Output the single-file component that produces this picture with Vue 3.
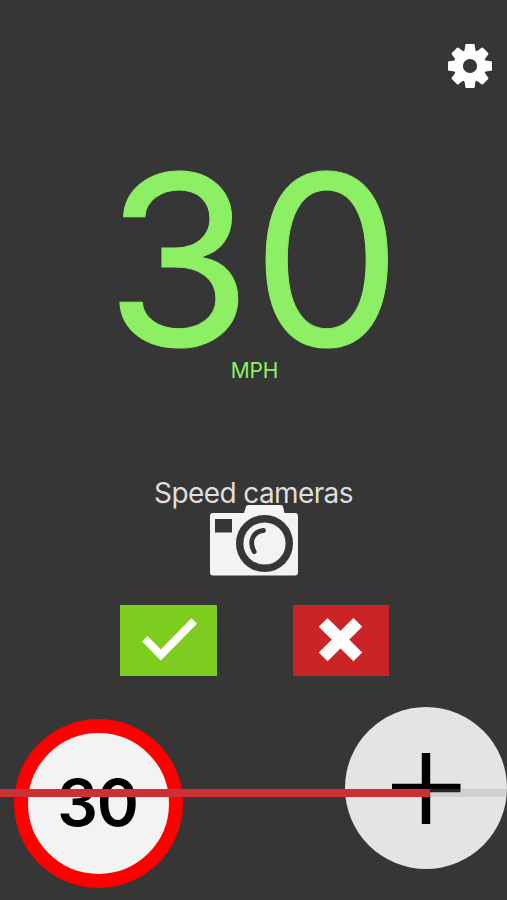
<script setup>
import { ref } from 'vue'

const speed = ref(30)
const limit = ref(30)
const progress = ref(84.9)
const teeth = [0, 45, 90, 135, 180, 225, 270, 315]
</script>

<template>
  <main class="screen">
    <header class="top">
      <button class="plain" aria-label="Settings">
        <svg class="gear" viewBox="-22 -22 44 44">
          <path
            v-for="angle in teeth"
            :key="angle"
            :transform="`rotate(${angle})`"
            d="M-3.700 -22H3.700Q4.600 -22 4.700 -21L5.200 -17L6 -14.500L0 -10L-6 -14.500L-5.200 -17L-4.700 -21Q-4.600 -22 -3.700 -22Z"
          />
          <circle r="11.5" fill="none" stroke="#fff" stroke-width="8.8" />
        </svg>
      </button>
    </header>

    <section class="speed">
      <div class="value">{{ speed }}</div>
      <div class="unit">MPH</div>
    </section>

    <section class="report">
      <div class="title">Speed cameras</div>
      <svg class="camera" viewBox="0 0 88 71">
        <path
          d="M3 8H34L36 1.500Q36.500 0 38 0H71Q72.500 0 73 1.500L74.500 8H85Q88 8 88 11V67.500Q88 70.500 85 70.500H3Q0 70.500 0 67.500V11Q0 8 3 8Z"
          fill="#f3f3f3"
        />
        <rect x="5" y="14" width="17" height="13.500" fill="#363636" />
        <circle cx="54.500" cy="38.500" r="24.800" fill="none" stroke="#363636" stroke-width="7.400" />
        <path
          d="M53.500 25.500C43 26.500 38.500 36.500 44.200 46.700"
          fill="none"
          stroke="#363636"
          stroke-width="4.800"
          stroke-linecap="round"
        />
      </svg>
      <div class="answers">
        <button class="answer yes" aria-label="Confirm">
          <svg viewBox="0 0 97 71">
            <path d="M24.800 33.800L40.800 50L74.200 16" fill="none" stroke="#fff" stroke-width="7.800" />
          </svg>
        </button>
        <button class="answer no" aria-label="Dismiss">
          <svg viewBox="0 0 97 71">
            <path d="M30.500 17.500L65.500 52.500M65.500 17.500L30.500 52.500" stroke="#fff" stroke-width="12.600" />
          </svg>
        </button>
      </div>
    </section>

    <footer class="bottom">
      <div class="limit"><span>{{ limit }}</span></div>
      <button class="add" aria-label="Add">
        <svg viewBox="0 0 162 162">
          <path d="M81 46V117M47 81H115.500" stroke="#000" stroke-width="8.400" />
        </svg>
      </button>
      <div class="track"><div class="fill" :style="{ width: progress + '%' }"></div></div>
    </footer>
  </main>
</template>

<style>
body {
  margin: 0;
  background: #363636;
}
</style>

<style scoped>
.screen {
  display: flex;
  flex-direction: column;
  height: 900px;
  overflow: hidden;
  background: #363636;
  font-family: Inter, "Liberation Sans", sans-serif;
}
button {
  display: block;
  padding: 0;
  border: 0;
}
svg {
  display: block;
}
.plain {
  background: none;
}
.top {
  display: flex;
  justify-content: flex-end;
  height: 88px;
  padding: 44px 15px 0 0;
  box-sizing: border-box;
}
.gear {
  width: 44px;
  height: 44px;
  fill: #fff;
}
.speed {
  display: flex;
  flex-direction: column;
  align-items: center;
  height: 388px;
  padding-top: 81px;
  box-sizing: border-box;
  color: #8df064;
}
.value {
  height: 180px;
  font-size: 237px;
  line-height: 181px;
  white-space: nowrap;
  -webkit-text-stroke: 1px #8df064;
}
.unit {
  margin-top: 9px;
  padding-left: 2px;
  font-size: 21px;
  line-height: 26px;
  letter-spacing: -0.2px;
}
.report {
  display: flex;
  flex-direction: column;
  align-items: center;
  height: 231px;
}
.title {
  height: 29px;
  font-size: 28px;
  line-height: 34px;
  letter-spacing: -0.6px;
  color: #dedede;
  white-space: nowrap;
}
.camera {
  width: 88px;
  height: 71px;
}
.answers {
  display: flex;
  gap: 76px;
  margin-top: 29px;
  padding-left: 2px;
}
.answer {
  width: 97px;
  height: 71px;
}
.yes {
  background: #7fcc20;
}
.no {
  width: 96px;
  margin-right: 1px;
  background: #cb2426;
}
.bottom {
  position: relative;
  display: flex;
  justify-content: space-between;
  height: 193px;
  padding-left: 14.4px;
}
.limit {
  display: flex;
  align-items: center;
  justify-content: center;
  width: 169px;
  height: 169px;
  margin-top: 12.4px;
  padding: 0 3px 3px 0;
  box-sizing: border-box;
  border: 14px solid #fe0000;
  border-radius: 50%;
  background: #f3f3f3;
  color: #000;
  font-size: 64px;
  font-weight: 560;
  letter-spacing: -1.4px;
}
.add {
  width: 162px;
  height: 162px;
  border-radius: 50%;
  background: #e4e4e4;
}
.track {
  position: absolute;
  top: 82px;
  left: 0;
  width: 100%;
  height: 8px;
  background: rgba(150, 150, 156, 0.25);
}
.fill {
  height: 100%;
  background: #cc3033;
}
</style>
